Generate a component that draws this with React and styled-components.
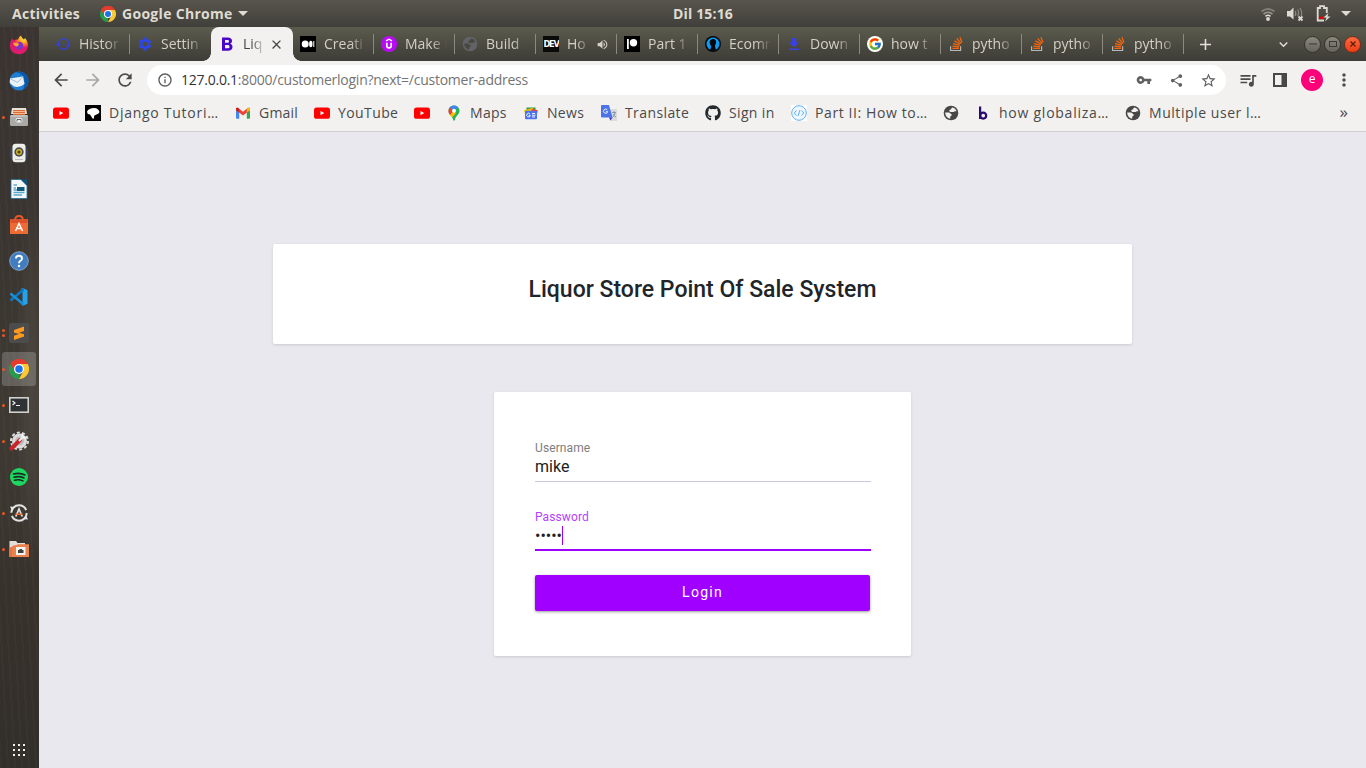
import React from 'react';
import styled, { createGlobalStyle, css } from 'styled-components';
import {
  MdHistory, MdSettings, MdArrowBack, MdArrowForward, MdRefresh, MdInfoOutline,
  MdVpnKey, MdShare, MdStarBorder, MdQueueMusic, MdMoreVert, MdClose, MdAdd,
  MdExpandMore, MdVolumeUp,
} from 'react-icons/md';
import { FcGoogle } from 'react-icons/fc';
import { FaGithub } from 'react-icons/fa';

const GlobalStyle = createGlobalStyle`
  * { box-sizing: border-box; }
  html, body { margin: 0; padding: 0; overflow: hidden; }
  svg { display: block; flex: none; }
`;

const ui = `"Open Sans", "Noto Sans", sans-serif`;

const Screen = styled.div`
  width: 1366px;
  height: 768px;
  display: grid;
  grid-template: 27px 741px / 39px 1327px;
  overflow: hidden;
  font-family: ${ui};
`;

/* ---------- desktop top bar ---------- */
const TopBar = styled.header`
  grid-column: 1 / 3;
  display: grid;
  grid-template-columns: 1fr auto 1fr;
  align-items: center;
  padding: 0 15px 0 12px;
  background: linear-gradient(#59554d, #403f3a);
  color: #dfdbd2;
  font-weight: 700;
  font-size: 14px;
  line-height: 26px;
`;
const BarGroup = styled.div`
  display: flex;
  align-items: center;
  justify-content: ${(p) => (p.$end ? 'flex-end' : 'flex-start')};
`;
const Fixed = styled.span`
  flex: none;
  width: ${(p) => p.$w}px;
  letter-spacing: ${(p) => p.$ls || 0}px;
  white-space: nowrap;
`;
const Clock = styled.span`
  margin-left: 43px;
  letter-spacing: 0.15px;
  white-space: nowrap;
`;
const BarIcon = styled.span`
  display: flex;
  margin-left: ${(p) => p.$ml || 0}px;
`;

/* ---------- dock ---------- */
const Dock = styled.nav`
  display: flex;
  flex-direction: column;
  background:
    radial-gradient(ellipse at 80% 48%, #4b463e 0, transparent 35%),
    repeating-linear-gradient(87deg, rgba(255, 255, 240, 0.02) 0 2px, transparent 2px 7px),
    linear-gradient(#3b3431, #3a3530 30%, #3e3a33 55%, #38322c 75%, #322e2a);
`;
const DockItem = styled.div`
  position: relative;
  height: 36px;
  display: flex;
  align-items: center;
  justify-content: center;
  padding-right: 1px;
`;
const DockTile = styled.div`
  width: 34px;
  height: 34px;
  display: flex;
  align-items: center;
  justify-content: center;
  border-radius: 3px;
  background: ${(p) => (p.$active ? 'rgba(255,255,255,0.2)' : 'none')};
`;
const RunDots = styled.span`
  position: absolute;
  left: 2px;
  top: 0;
  bottom: 0;
  display: flex;
  flex-direction: column;
  justify-content: center;
  gap: 2px;
`;
const RunDot = styled.i`
  width: 3px;
  height: 3px;
  border-radius: 50%;
  background: #e95420;
`;
const AppsGrid = styled.div`
  margin: auto 0 12px 13px;
  display: grid;
  grid-template-columns: repeat(3, 2px);
  gap: 3px;
  i { width: 2px; height: 2px; background: #f2f0ee; }
`;

/* ---------- browser ---------- */
const Browser = styled.main`
  display: flex;
  flex-direction: column;
  background: #e9e8ee;
`;
const TabStrip = styled.div`
  flex: none;
  height: 34px;
  display: flex;
  align-items: center;
  padding-left: 8px;
  background: linear-gradient(#5b5b4d, #3d3c37);
`;
const Tab = styled.div`
  position: relative;
  flex: none;
  width: ${(p) => p.$w || 81}px;
  height: 34px;
  display: flex;
  align-items: center;
  padding: 0 7px 0 ${(p) => p.$pl || 8}px;
  color: #d3d0c4;
  font-size: 14px;
  ${(p) => p.$sep && css`
    &::after {
      content: '';
      position: absolute;
      right: -1px;
      top: 7px;
      width: 1px;
      height: 20px;
      background: #8c8a80;
    }
  `}
  ${(p) => p.$active && css`
    background: #f2f1f0;
    color: #45453f;
    border-radius: 8px 8px 0 0;
    z-index: 1;
    &::before, &::after {
      content: '';
      position: absolute;
      bottom: 0;
      width: 8px;
      height: 8px;
    }
    &::before { left: -8px; background: radial-gradient(circle at 0 0, transparent 7.5px, #f2f1f0 8px); }
    &::after { right: -8px; background: radial-gradient(circle at 100% 0, transparent 7.5px, #f2f1f0 8px); }
  `}
`;
const Favicon = styled.span`
  flex: none;
  width: 16px;
  height: 16px;
  display: flex;
  align-items: center;
  justify-content: center;
  margin-right: 8px;
  overflow: hidden;
`;
const TabTitle = styled.span`
  flex: none;
  width: ${(p) => p.$w || 42}px;
  padding-bottom: 2px;
  overflow: hidden;
  white-space: nowrap;
  mask-image: linear-gradient(90deg, #000 calc(100% - 15px), transparent);
`;
const TabAction = styled.span`
  flex: none;
  margin-left: ${(p) => p.$ml}px;
`;
const StripButton = styled.div`
  display: flex;
  margin-left: ${(p) => p.$ml}px;
  color: #e3e0d8;
`;
const WindowButtons = styled.div`
  display: flex;
  gap: 3px;
  margin-left: 12px;
`;
const WindowButton = styled.span`
  width: 17px;
  height: 17px;
  border-radius: 50%;
  display: flex;
  align-items: center;
  justify-content: center;
  border: 1px solid ${(p) => (p.$close ? '#7a2c17' : '#34332e')};
  background: ${(p) => (p.$close ? 'linear-gradient(#fa6a3e, #ee3d14)' : 'linear-gradient(#8b897e, #65635b)')};
`;
const Toolbar = styled.div`
  flex: none;
  height: 38px;
  display: flex;
  align-items: center;
  padding-left: 6px;
  background: #f2f1f0;
  color: #4b4b4b;
`;
const Cell = styled.span`
  flex: none;
  width: 32px;
  display: flex;
  justify-content: center;
  color: ${(p) => p.$color || 'inherit'};
`;
const UrlPill = styled.div`
  width: 1079px;
  height: 30px;
  margin: 0 6px 0 6px;
  display: flex;
  align-items: center;
  border-radius: 15px;
  background: #fff;
  color: #747474;
  font-size: 14px;
  padding: 0 2px;
`;
const Url = styled.span`
  flex: 1;
  padding-bottom: 2px;
  letter-spacing: ${(p) => p.$ls}px;
  white-space: nowrap;
  b { font-weight: 400; color: #333; }
`;
const Avatar = styled.span`
  width: 22px;
  height: 22px;
  border-radius: 50%;
  background: #fd0079;
  color: #fff;
  font-size: 12px;
  line-height: 20px;
  text-align: center;
`;
const Bookmarks = styled.div`
  flex: none;
  height: 33px;
  display: flex;
  align-items: center;
  gap: 16px;
  padding: 0 18px 4px 14px;
  background: #f2f1f0;
  border-bottom: 1px solid #d0cfd1;
  color: #4a4a4a;
  font-size: 14px;
`;
const Bookmark = styled.div`
  display: flex;
  align-items: center;
  ${Favicon} { margin-right: ${(p) => (p.$bare ? 0 : 8)}px; }
  ${Fixed} { padding-bottom: 2px; }
`;
const More = styled.span`
  margin-left: auto;
  padding-bottom: 3px;
  font-size: 17px;
`;

/* ---------- page ---------- */
const Page = styled.section`
  flex: 1;
  display: flex;
  flex-direction: column;
  align-items: center;
  padding-top: 112px;
  background: #e9e8ee;
  font-family: Roboto, sans-serif;
  color: #212529;
`;
const Card = styled.div`
  background: #fff;
  border-radius: 2px;
  box-shadow: 0 1px 3px rgba(0, 0, 0, 0.13);
`;
const TitleCard = styled(Card)`
  width: 859px;
  height: 100px;
  padding-top: 31px;
  text-align: center;
`;
const Title = styled.h1`
  margin: 0;
  font-size: 23px;
  line-height: 30px;
  font-weight: 500;
`;
const LoginCard = styled(Card)`
  width: 417px;
  height: 264px;
  margin-top: 48px;
  padding: 48px 40px 0 41px;
`;
const Field = styled.div`
  height: 42px;
  margin-bottom: ${(p) => (p.$focus ? 24 : 27)}px;
  border-bottom: ${(p) => (p.$focus ? '2px solid #9c00ff' : '1px solid #cac8dc')};
`;
const FieldLabel = styled.div`
  font-size: 12px;
  line-height: 16px;
  letter-spacing: 0.1px;
  color: ${(p) => (p.$focus ? '#b540ff' : '#7d7d7d')};
`;
const FieldValue = styled.div`
  display: flex;
  align-items: center;
  height: 22px;
  font-size: 16px;
  line-height: 20px;
  color: #212121;
`;
const Caret = styled.i`
  width: 1px;
  height: 19px;
  margin-bottom: 2px;
  background: #9c00ff;
`;
const LoginButton = styled.button`
  display: block;
  width: 335px;
  height: 36px;
  padding: 0 0 2px;
  border: 0;
  border-radius: 2px;
  background: #9f00ff;
  color: #fff;
  font: 400 14px Roboto, sans-serif;
  letter-spacing: 1.25px;
  box-shadow: 0 1px 3px rgba(0, 0, 0, 0.4);
`;

/* ---------- drawings ---------- */
const Chrome = ({ size }) => (
  <svg width={size} height={size} viewBox="0 0 48 48">
    <path d="M24 24 3.2 12A24 24 0 0 1 44.8 12Z" fill="#e33b2e" />
    <path d="M24 24 24 48A24 24 0 0 1 3.2 12Z" fill="#269b4b" />
    <path d="M3.2 12A24 24 0 0 1 44.8 12H24V24L14 30Z" fill="#e33b2e" />
    <path d="M44.8 12H24L34.4 30 24 48A24 24 0 0 0 44.8 12Z" fill="#fcc934" />
    <circle cx="24" cy="24" r="12" fill="#fff" />
    <circle cx="24" cy="24" r="9" fill="#1a73e8" />
  </svg>
);
const YouTube = () => (
  <svg width="16" height="16" viewBox="0 0 16 16"><rect y="2.4" width="16" height="11.4" rx="2.6" fill="#f00" /><path d="M6.5 5.9v4.4l3.8-2.2z" fill="#fff" /></svg>
);
const Globe = ({ c }) => (
  <svg width="16" height="16" viewBox="0 0 16 16"><circle cx="8" cy="8" r="7.3" fill={c} /><path d="M2.200 7.600H5.800C7.200 7.600 7.300 9 8.600 9.200V10.300C8.600 11 7.600 11 7.200 11.700V13.700C4.500 13.400 2.200 11 2.200 7.600ZM9.500 2.500C11.500 3 12.900 4.300 13.500 6.200H11.800C11 6.200 11 7 10.200 7H8.300C7.300 7 6.300 6.500 6.300 5.500 6.300 4.600 7.600 4.700 8 4.300 8.500 3.800 8.300 2.800 9.500 2.500Z" fill={c === '#474747' ? '#f2f1f0' : '#484840'} /></svg>
);
const Stack = () => (
  <svg width="16" height="16" viewBox="0 0 16 16" fill="none">
    <path d="M2.600 10.200V14.500H12.600V10.200" stroke="#b5b8b8" strokeWidth="1.200" />
    <path d="M4.300 12.400H11M4.400 10.200 11.100 10.900M5 7.600 11.500 9.300M6.400 4.900 12.200 8.300M8.700 2.500 13 7.400M11.900 1.200 14 6.400" stroke="#f4660f" strokeWidth="1.250" />
  </svg>
);
const Bootstrap = () => (
  <svg width="16" height="16" viewBox="0 0 16 16"><path fillRule="evenodd" fill="#4a06c9" d="M3 1.500H8.700C11.600 1.500 13 2.900 13 5 13 6.500 12.200 7.400 11 7.800 12.700 8.200 13.500 9.300 13.500 11 13.500 13.400 11.800 14.700 8.900 14.700H3ZM6 4V6.800H8.300C9.500 6.800 10 6.300 10 5.400 10 4.500 9.500 4 8.300 4ZM6 9.100V12.200H8.600C9.900 12.200 10.500 11.700 10.500 10.700 10.500 9.600 9.900 9.100 8.600 9.100Z" /></svg>
);
const Medium = () => (
  <svg width="16" height="16" viewBox="0 0 16 16"><rect width="16" height="16" fill="#000" /><circle cx="5.200" cy="8" r="3.500" fill="#fff" /><ellipse cx="10.800" cy="8" rx="1.700" ry="3.300" fill="#fff" /><rect x="13.300" y="5" width="1" height="6" fill="#fff" /></svg>
);
const Udemy = () => (
  <svg width="16" height="16" viewBox="0 0 16 16"><circle cx="8" cy="8" r="8" fill="#b90af5" /><path d="M5 4.900 8 3.200 11 4.900" fill="none" stroke="#fff" strokeWidth="1.400" /><path d="M5.800 6.700V9.800C5.800 12.500 10.200 12.500 10.200 9.800V6.700" fill="none" stroke="#fff" strokeWidth="1.700" /></svg>
);
const DevBox = styled.span`
  width: 16px;
  height: 16px;
  background: #0a0a0a;
  color: #fff;
  font: 700 9px/16px "DejaVu Sans Condensed", "Liberation Sans", sans-serif;
  text-align: center;
  letter-spacing: -1.1px;
  white-space: nowrap;
`;
const Patreon = () => (
  <svg width="16" height="16" viewBox="0 0 16 16"><rect width="16" height="16" fill="#000" /><rect x="3" y="3" width="1.800" height="10" fill="#fff" /><circle cx="9.500" cy="6.700" r="3.700" fill="#fff" /></svg>
);
const Head = () => (
  <svg width="16" height="16" viewBox="0 0 16 16"><circle cx="8" cy="8" r="8" fill="#06070c" /><circle cx="8" cy="8" r="6.500" fill="#0a9df5" /><path d="M8 3.100C10.500 3.100 11.400 5 11 7 10.800 8.500 10 9 10 10.200L11 14.200Q8 15.500 5 14.200L6.200 10.300C5.600 9.500 4.800 8.700 4.700 6.600 4.600 4.500 6 3.100 8 3.100Z" fill="#06070c" /></svg>
);
const Download = () => (
  <svg width="16" height="16" viewBox="0 0 16 16" fill="#3b3fe6"><path d="M5.800 2H10.200V6.400H13L8 11.300 3 6.400H5.800ZM3 12.400H13V14H3Z" /></svg>
);
const GoogleDisc = styled.span`
  width: 16px;
  height: 16px;
  border-radius: 50%;
  background: #fff;
  display: flex;
  align-items: center;
  justify-content: center;
`;
const Django = () => (
  <svg width="16" height="16" viewBox="0 0 16 16"><rect width="16" height="16" fill="#000" /><path d="M2 6.800Q3 3.800 7 3.200 11.500 2.800 13 4.500 14.800 6 14.300 7.500 13.500 9 11.500 9.500 9.500 10 9 11.200V13.500H7.500L6 11 5 9.500 2.800 9Z" fill="#fff" /></svg>
);
const Gmail = () => (
  <svg width="16" height="16" viewBox="0 0 16 16"><path d="M1 4H4.200V13.800H2Q1 13.800 1 12.800Z" fill="#4285f4" /><path d="M11.800 4H15V12.800Q15 13.800 14 13.800H11.800Z" fill="#34a853" /><path d="M1 5.200V4Q1 2.200 2.900 2.800L8 6.700 13.100 2.800Q15 2.200 15 4V5.200L8 10.400Z" fill="#ea4335" /><path d="M11.800 3.900 13.100 2.800Q15 2.200 15 4V5.200L11.800 7.600Z" fill="#fbbc04" /><path d="M1 5.200V4Q1 2.200 2.900 2.800L4.200 3.900V7.600Z" fill="#c5221f" /></svg>
);
const Maps = () => (
  <svg width="16" height="16" viewBox="0 0 16 16"><path d="M2.500 6C2.500 2.500 5 .400 8 .400S13.500 2.500 13.500 6C13.500 9.500 9.500 11 8.800 15 8.500 16 7.500 16 7.200 15 6.500 11 2.500 9.500 2.500 6Z" fill="#22b455" /><path d="M3.900 2.200 8 6 3.900 10C3 8.800 2.500 7.600 2.500 6Q2.500 3.700 3.900 2.200Z" fill="#ea4335" /><path d="M3.900 10 8 6 10 8.200 6.100 12.500Z" fill="#fbbc04" /><path d="M8 6 12 2.200Q10.300.400 8 .400 5.500.400 3.900 2.200Z" fill="#4285f4" /><circle cx="8" cy="5.800" r="2" fill="#fff" /></svg>
);
const News = () => (
  <svg width="16" height="16" viewBox="0 0 16 16"><path d="M3.500 2.500H12.500V8H3.500Z" fill="#1e9e4c" /><path d="M1 5.200 10 2.800 12 8 2 9Z" fill="#fbbc04" /><path d="M14.800 5.200 9 3.700 8 9H14Z" fill="#ea4335" /><rect x="2" y="5.800" width="12" height="8.500" rx="1" fill="#4b73ec" /><path d="M7 9.100A1.800 1.800 0 1 0 7.300 10.400H5.700M9 8.500H12M9 10.200H12.500M9 11.900H12" stroke="#fff" strokeWidth=".9" fill="none" /></svg>
);
const Translate = () => (
  <svg width="16" height="16" viewBox="0 0 16 16"><path d="M6 4H16V16H9Z" fill="#dcdcdc" /><path d="M1 0H8L11.500 12.500H1Q0 12.500 0 11.500V1Q0 0 1 0Z" fill="#4a74e8" /><path d="M8 12.500H11.500L9.500 15.500Z" fill="#3a3ccc" /><path d="M6.400 5A2.100 2.100 0 1 0 6.700 6.700H4.800" stroke="#fff" strokeWidth=".9" fill="none" /><path d="M11 7.500H15M13 6.200V7.500M11.500 12.500Q14 10.500 14.200 7.500M12 9Q13 11 15 12" stroke="#7c92a6" strokeWidth=".9" fill="none" /></svg>
);
const CodeDisc = () => (
  <svg width="16" height="16" viewBox="0 0 16 16" fill="none" stroke="#64b0ee"><rect width="16" height="16" fill="#fff" stroke="none" /><circle cx="8" cy="8" r="7.300" fill="#edf7ff" strokeWidth="1" /><path d="M5.500 5.500 3.300 8 5.500 10.500M10.500 5.500 12.700 8 10.500 10.500M9 5 7 11" strokeWidth="1" /></svg>
);
const LetterB = () => (
  <svg width="16" height="16" viewBox="0 0 16 16" fill="none" stroke="#2a0a6e" strokeWidth="2.200"><path d="M5.100 1.500V14" /><circle cx="8.200" cy="10.600" r="3" /></svg>
);

const Wifi = () => (
  <svg width="16" height="16" viewBox="0 0 16 16" fill="none"><path d="M1.500 5.500Q8 .500 14.500 5.500" stroke="#817e76" strokeWidth="1.800" /><path d="M3.500 8Q8 4.500 12.500 8" stroke="#99958c" strokeWidth="1.700" /><path d="M5.500 10.300Q8 8.300 10.500 10.300" stroke="#dfdbd2" strokeWidth="1.600" /><circle cx="8" cy="13" r="1.900" fill="#dfdbd2" /></svg>
);
const Muted = () => (
  <svg width="17" height="16" viewBox="0 0 17 16" fill="none"><path d="M0 5H3L6.500 1.500V13.500L3 10.500H0Z" fill="#dfdbd2" /><path d="M8.200 5Q9.500 7.500 8.200 10M10.500 3.500Q12.600 7 10.700 10M12.800 2Q15.600 6 14.200 10" stroke="#8d8a82" strokeWidth="1.200" /><path d="M11.500 10.500 15.500 14.500M15.500 10.500 11.500 14.500" stroke="#dfdbd2" strokeWidth="1.800" /></svg>
);
const Battery = () => (
  <svg width="15" height="17" viewBox="0 0 15 17" fill="none"><path d="M8 15.500H1.700V3H4V1.200H8V3H10.800V8" stroke="#dfdbd2" strokeWidth="1.800" /><rect x="3" y="11.500" width="4" height="2.500" fill="#e00000" /><path d="M12.500 8 7.500 12.500H10.500L9 16.500 14.500 11.500H11.500Z" fill="#dfdbd2" /></svg>
);
const Down = () => (
  <svg width="10" height="5" viewBox="0 0 10 5"><path d="M0 0H10L5 5Z" fill="#dfdbd2" /></svg>
);

const d20 = { width: 20, height: 20, viewBox: '0 0 20 20' };
const dockIcons = [
  { icon: (
    <svg {...d20}><defs><radialGradient id="ff" cx="75%" cy="15%"><stop offset="0" stopColor="#fff04a" /><stop offset=".5" stopColor="#ffa01e" /><stop offset=".9" stopColor="#fb3350" /><stop offset="1" stopColor="#e01a6c" /></radialGradient></defs>
      <path d="M3 3.500 5 5.500Q7 4 9 4.500 10 1.500 12 .500 12.500 3 15 4.500L16 3Q19.500 7 19 12 17 19.200 10 19.300 2 19 .800 11.500.800 7 3 3.500Z" fill="url(#ff)" /><path d="M10 6.500Q14.500 7 14.300 11 13.500 15 9.800 14.800 6 14 6 10.500 8 9.500 10.500 9.800 8 8.800 10 6.500Z" fill="#7b35c9" /><path d="M4 8Q7 6.500 10 9L8.500 11.500Q5 11.500 4 8Z" fill="#ffa62a" /></svg>) },
  { icon: (
    <svg {...d20}><circle cx="10" cy="10" r="9.500" fill="#1f7ed2" /><path d="M7 1Q17-.500 19.500 8 20 15 14 19 17 12 14 5 11 1.500 7 1Z" fill="#0a58a8" /><path d="M1 7.500 14 5.500 15.500 13Q11 17 5 15.500L.800 12Z" fill="#ebf2f8" /><path d="M1 7.500 8.500 11.500 14 5.500" fill="none" stroke="#a9bed2" /></svg>) },
  { run: 1, icon: (
    <svg {...d20}><path d="M3 1H17L18 7H2Z" fill="#e7e1da" /><rect x="4" y="3" width="12" height="5" fill="#d96c34" /><path d="M4 4.500H16M4 6.500H16" stroke="#f3ba8d" /><rect x="1" y="8" width="18" height="11" rx="1.500" fill="#aaa9a5" /><path d="M1.500 9H18.500" stroke="#d8d7d3" /><rect x="6.500" y="11" width="7" height="4.500" rx="2" fill="#eee" /><path d="M8 14.500V12.500H12V14.500" fill="none" stroke="#666" /></svg>) },
  { icon: (
    <svg {...d20}><circle cx="10" cy="10" r="9.500" fill="#3c4453" /><rect x="3.500" y=".800" width="13" height="18.500" rx="3" fill="#edeeea" /><circle cx="10" cy="9" r="4.700" fill="#4d4f4c" /><circle cx="10" cy="9" r="3" fill="#d1b529" /><circle cx="10" cy="9" r="1.600" fill="#4a4310" /><path d="M6 16.500H14" stroke="#bbb" /></svg>) },
  { icon: (
    <svg {...d20}><path d="M2 .500H12L18 6.500V19.500H2Z" fill="#f4f8fa" stroke="#1e6a96" strokeWidth=".8" /><path d="M12 .500H18V6.500Z" fill="#0d537d" /><path d="M4.500 6H8M4.500 9H7" stroke="#2381af" /><rect x="8" y="8" width="7.500" height="4" fill="#12597a" /><path d="M4.500 11H8M4.500 13.500H15.500M4.500 16H13" stroke="#5aa7cd" strokeWidth="1.300" /></svg>) },
  { icon: (
    <svg {...d20}><path d="M1 4H19V19H1Z" fill="#ef6b35" /><path d="M1 4H19L18 8H2Z" fill="#d9502a" /><path d="M6 5.500Q6 1 10 1T14 5.500" fill="none" stroke="#e8582a" strokeWidth="1.800" /><path d="M6.500 16 10 8.500 13.500 16M7.500 13.500H12.500" fill="none" stroke="#fff" strokeWidth="1.500" /></svg>) },
  { icon: (
    <svg {...d20}><circle cx="10" cy="10" r="9.300" fill="#427dc0" stroke="#8fb3da" strokeWidth=".8" /><path d="M7 7.500Q7 4.800 10 4.800T13 7.500Q13 9 11.200 10 10 10.800 10 12.300" fill="none" stroke="#fff" strokeWidth="1.900" /><circle cx="10" cy="15" r="1.200" fill="#fff" /></svg>) },
  { icon: (
    <svg {...d20}><path d="M13.500 1 18.500 3.200V16.800L13.500 19Z" fill="#26a2ed" /><path d="M1.500 13.500 13.500 3.500V1" fill="none" stroke="#0b79c6" strokeWidth="2.600" /><path d="M1.500 6.500 13.500 16.500V18" fill="none" stroke="#1790dc" strokeWidth="2.600" /></svg>) },
  { run: 2, icon: (
    <svg {...d20}><rect width="20" height="20" rx="2" fill="#4c4c4c" /><path d="M5 7 15 3.500V8L10 9.700 15 11.200V13.500L5 17V12.700L10 11 5 9.500Z" fill="#ff9a1f" /></svg>) },
  { run: 1, active: true, icon: <Chrome size={20} /> },
  { run: 1, icon: (
    <svg {...d20}><rect x=".800" y="2.800" width="18.400" height="14.400" fill="#2e3234" stroke="#d0d0cd" strokeWidth="1.600" /><path d="M3.500 6 6 8 3.500 10M7 10.500H11" fill="none" stroke="#eee" strokeWidth="1.200" /></svg>) },
  { run: 1, icon: (
    <svg {...d20}><circle cx="10.500" cy="10" r="6" fill="#bdbdbd" stroke="#dcdcdc" strokeWidth="3" /><circle cx="10.500" cy="10" r="8.500" fill="none" stroke="#dcdcdc" strokeWidth="2" strokeDasharray="3 2.300" /><path d="M2.500 17.500 11 9" stroke="#c7252a" strokeWidth="4" strokeLinecap="round" /><path d="M10 10 15 5M13 2.500 14 6 17.500 7" stroke="#f1f1f1" strokeWidth="2" fill="none" /></svg>) },
  { icon: (
    <svg {...d20}><circle cx="10" cy="10" r="9" fill="#1ed760" /><path d="M4.500 7Q10.500 5.300 16 8M5 10.200Q10.500 8.700 15 11M5.500 13.200Q10 12 14 13.900" stroke="#1c2a20" strokeWidth="1.600" fill="none" strokeLinecap="round" /></svg>) },
  { run: 1, icon: (
    <svg {...d20} fill="none"><circle cx="10" cy="10" r="7.700" stroke="#e3e3e3" strokeWidth="2" strokeDasharray="21 3.200" /><path d="M1 3.500 6 4 3 8ZM19 16.500 14 16 17 12Z" fill="#e3e3e3" /><path d="M6.800 13.500 10 6 13.200 13.500" stroke="#e3e3e3" strokeWidth="1.700" /><path d="M6.500 11.200H13.500" stroke="#ee6a30" strokeWidth="1.500" /></svg>) },
  { run: 1, icon: (
    <svg {...d20}><path d="M.500 2H7L8.500 4H16V17H.500Z" fill="#e2dfda" /><path d="M0 18V9L9 5.500H20V18Z" fill="#e2723f" /><path d="M3 7 9 5.500H20V18H3Z" fill="#e9824f" /><rect x="7" y="8" width="9.500" height="8" fill="#f3f3f0" /><path d="M9 14V11H10.500V10H13V11H14.500V14Z" fill="#40403c" /></svg>) },
];

const tabs = [
  { w: 82, icon: <MdHistory size={16} color="#3143e8" />, t: 'Histor', sep: true },
  { w: 82, icon: <MdSettings size={16} color="#2f46e6" />, t: 'Settin' },
  { w: 82, icon: <Bootstrap />, t: 'Liq', active: true, tw: 23, close: true },
  { w: 80, pl: 7, icon: <Medium />, t: 'Creati', sep: true },
  { icon: <Udemy />, t: 'Make I', sep: true },
  { icon: <Globe c="#626367" />, t: 'Build', sep: true },
  { icon: <DevBox>DEV</DevBox>, t: 'Ho', sep: true, tw: 24, sound: true },
  { icon: <Patreon />, t: 'Part 1', sep: true },
  { icon: <Head />, t: 'Ecomr', sep: true },
  { icon: <Download />, t: 'Down', sep: true },
  { icon: <GoogleDisc><FcGoogle size={14} /></GoogleDisc>, t: 'how t', sep: true },
  { icon: <Stack />, t: 'pytho', sep: true },
  { icon: <Stack />, t: 'pytho', sep: true },
  { icon: <Stack />, t: 'pytho', sep: true },
];

const bookmarks = [
  { icon: <YouTube /> },
  { icon: <Django />, t: 'Django Tutori…', w: 110, ls: 0.73 },
  { icon: <Gmail />, t: 'Gmail', w: 39, ls: 0.2 },
  { icon: <YouTube />, t: 'YouTube', w: 60, ls: 0.4 },
  { icon: <YouTube /> },
  { icon: <Maps />, t: 'Maps', w: 37, ls: 0.3 },
  { icon: <News />, t: 'News', w: 38, ls: 0.3 },
  { icon: <Translate />, t: 'Translate', w: 64, ls: 0.4 },
  { icon: <FaGithub size={16} color="#24292e" />, t: 'Sign in', w: 46, ls: 0.35 },
  { icon: <CodeDisc />, t: 'Part II: How to…', w: 112, ls: 0.6 },
  { icon: <Globe c="#474747" /> },
  { icon: <LetterB />, t: 'how globaliza…', w: 110, ls: 0.75 },
  { icon: <Globe c="#474747" />, t: 'Multiple user l…', w: 112, ls: 0.55 },
];

export default function App() {
  return (
    <Screen>
      <GlobalStyle />
      <TopBar>
        <BarGroup>
          <Fixed $w={88} $ls={0.3}>Activities</Fixed>
          <Chrome size={16} />
          <BarIcon $ml={6} />
          <Fixed $w={116} $ls={0.3}>Google Chrome</Fixed>
          <Down />
        </BarGroup>
        <Clock>Dil 15:16</Clock>
        <BarGroup $end>
          <BarIcon><Wifi /></BarIcon>
          <BarIcon $ml={11}><Muted /></BarIcon>
          <BarIcon $ml={12}><Battery /></BarIcon>
          <BarIcon $ml={10}><Down /></BarIcon>
        </BarGroup>
      </TopBar>
      <Dock>
        {dockIcons.map((d, i) => (
          <DockItem key={i}>
            {d.run && <RunDots><RunDot />{d.run === 2 && <RunDot />}</RunDots>}
            <DockTile $active={d.active}>{d.icon}</DockTile>
          </DockItem>
        ))}
        <AppsGrid>{Array.from({ length: 9 }, (_, i) => <i key={i} />)}</AppsGrid>
      </Dock>
      <Browser>
        <TabStrip>
          {tabs.map((t, i) => (
            <Tab key={i} $w={t.w} $pl={t.pl} $sep={t.sep} $active={t.active}>
              <Favicon>{t.icon}</Favicon>
              <TabTitle $w={t.tw}>{t.t}</TabTitle>
              {t.close && <TabAction $ml={3}><MdClose size={15} /></TabAction>}
              {t.sound && <TabAction $ml={5}><MdVolumeUp size={13} /></TabAction>}
            </Tab>
          ))}
          <StripButton $ml={13}><MdAdd size={19} /></StripButton>
          <StripButton $ml={60}><MdExpandMore size={17} /></StripButton>
          <WindowButtons>
            <WindowButton><svg width="8" height="8"><path d="M0 4H8" stroke="#3a3934" /></svg></WindowButton>
            <WindowButton><svg width="8" height="8"><rect x=".5" y="1.500" width="7" height="5" fill="none" stroke="#3a3934" /></svg></WindowButton>
            <WindowButton $close><svg width="8" height="8"><path d="M1.500 1.500 6.500 6.500M6.500 1.500 1.500 6.500" stroke="#5a1c0c" strokeWidth="1.200" /></svg></WindowButton>
          </WindowButtons>
        </TabStrip>
        <Toolbar>
          <Cell><MdArrowBack size={20} /></Cell>
          <Cell $color="#a8a7a6"><MdArrowForward size={20} /></Cell>
          <Cell><MdRefresh size={20} /></Cell>
          <UrlPill>
            <Cell $color="#5a5a5a"><MdInfoOutline size={16} /></Cell>
            <Url $ls={-0.25}><b>127.0.0.1</b>:8000/customerlogin?next=/customer-address</Url>
            <Cell $color="#606060"><MdVpnKey size={16} /></Cell>
            <Cell $color="#606060"><MdShare size={15} /></Cell>
            <Cell $color="#606060"><MdStarBorder size={17} /></Cell>
          </UrlPill>
          <Cell><MdQueueMusic size={20} /></Cell>
          <Cell><svg width="14" height="14"><path d="M0 0H14V14H0ZM2 2V12H8.500V2Z" fillRule="evenodd" fill="#474747" /></svg></Cell>
          <Cell><Avatar>e</Avatar></Cell>
          <Cell><MdMoreVert size={20} /></Cell>
        </Toolbar>
        <Bookmarks>
          {bookmarks.map((b, i) => (
            <Bookmark key={i} $bare={!b.t}>
              <Favicon>{b.icon}</Favicon>
              {b.t && <Fixed $w={b.w} $ls={b.ls}>{b.t}</Fixed>}
            </Bookmark>
          ))}
          <More>»</More>
        </Bookmarks>
        <Page>
          <TitleCard><Title>Liquor Store Point Of Sale System</Title></TitleCard>
          <LoginCard>
            <Field>
              <FieldLabel>Username</FieldLabel>
              <FieldValue>mike</FieldValue>
            </Field>
            <Field $focus>
              <FieldLabel $focus>Password</FieldLabel>
              <FieldValue>•••••<Caret /></FieldValue>
            </Field>
            <LoginButton>Login</LoginButton>
          </LoginCard>
        </Page>
      </Browser>
    </Screen>
  );
}
